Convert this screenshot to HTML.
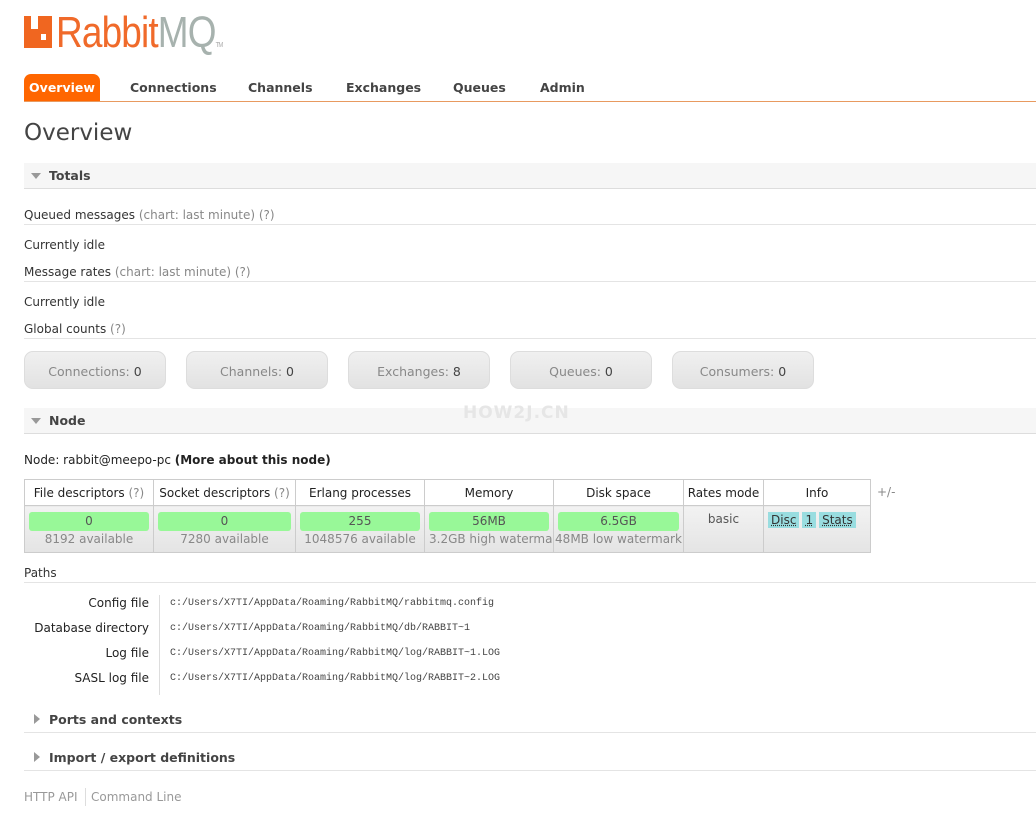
<!DOCTYPE html>
<html><head><meta charset="utf-8"><style>
*{margin:0;padding:0;box-sizing:border-box}
body{width:1036px;height:829px;background:#fff;font-family:"DejaVu Sans","Liberation Sans",sans-serif;font-size:12px;color:#484848;position:relative;overflow:hidden}
.a{position:absolute;white-space:nowrap}
.line{position:absolute;left:24px;right:0;height:1px;background:#e4e4e4}
.sec{position:absolute;left:24px;right:0;height:26px;background:#f6f6f6;border-bottom:1px solid #ddd}
.sec b{position:absolute;left:25px;top:5px;font-size:12.5px;color:#444}
.tri{position:absolute;left:7px;top:10px;width:0;height:0;border-left:5px solid transparent;border-right:5px solid transparent;border-top:6px solid #999}
.trr{position:absolute;left:10px;width:0;height:0;border-top:5px solid transparent;border-bottom:5px solid transparent;border-left:6px solid #999}
.g{color:#888}
.box{position:absolute;top:351px;width:142px;height:38px;border-radius:9px;background:linear-gradient(#f0f0f0,#e2e2e2);border:1px solid #ddd;text-align:center;line-height:39px;color:#888;font-size:12.5px}
.box span{color:#444}
table{position:absolute;left:24px;top:479px;border-collapse:collapse;table-layout:fixed;width:846px}
td,th{border:1px solid #ccc;text-align:center;font-weight:normal;font-size:12px;overflow:hidden;white-space:nowrap}
th{height:26px;color:#222;background:#fff}
td{height:47px;vertical-align:top;background:linear-gradient(#f2f2f2,#e4e4e4);color:#888;padding-top:6px}
.bar{margin:0 4px;height:19px;background:#98f898;border-radius:3px;color:#555;line-height:19px}
.sub{line-height:17px;white-space:nowrap}
.tag{display:inline-block;background:#99dde0;padding:1px 3px;color:#333;text-decoration:underline dotted;margin-right:3px}
.lab{position:absolute;right:887px;text-align:right;color:#222;white-space:nowrap}
.val{position:absolute;left:170px;font-family:"Liberation Mono",monospace;font-size:10px;color:#444}
</style></head><body>
<div class="a" style="left:24px;top:16px;width:28px;height:32px;background:#f06620"></div>
<div class="a" style="left:31px;top:16px;width:7px;height:13px;background:#fff"></div>
<div class="a" style="left:41px;top:34px;width:5px;height:6px;background:#fff"></div>
<div class="a" style="left:56px;top:8px;font-family:'Liberation Sans',sans-serif;font-size:44px;letter-spacing:-1px;color:#f06a2a;font-weight:normal;transform:scaleX(0.84);transform-origin:left">Rabbit<span style="color:#a7b2ae">MQ</span><span style="font-size:7px;color:#aaa">TM</span></div>

<div class="a" style="left:24px;top:74px;width:76px;height:27px;background:#ff6600;border-radius:7px 7px 0 0;color:#fff;font-weight:bold;font-size:12.5px;text-align:center;line-height:28px">Overview</div>
<div class="a" style="left:24px;right:0;top:101px;height:1px;background:#e89a60"></div>
<div class="a" style="left:130px;top:80px;font-weight:bold;font-size:12.5px;color:#444">Connections</div>
<div class="a" style="left:248px;top:80px;font-weight:bold;font-size:12.5px;color:#444">Channels</div>
<div class="a" style="left:346px;top:80px;font-weight:bold;font-size:12.5px;color:#444">Exchanges</div>
<div class="a" style="left:453px;top:80px;font-weight:bold;font-size:12.5px;color:#444">Queues</div>
<div class="a" style="left:540px;top:80px;font-weight:bold;font-size:12.5px;color:#444">Admin</div>

<div class="a" style="left:24px;top:120px;font-size:23px;color:#444">Overview</div>

<div class="sec" style="top:163px"><div class="tri"></div><b>Totals</b></div>
<div class="a" style="left:24px;top:208px;color:#333">Queued messages <span class="g">(chart: last minute) (?)</span></div>
<div class="line" style="top:224px"></div>
<div class="a" style="left:24px;top:238px;color:#333">Currently idle</div>
<div class="a" style="left:24px;top:265px;color:#333">Message rates <span class="g">(chart: last minute) (?)</span></div>
<div class="line" style="top:281px"></div>
<div class="a" style="left:24px;top:295px;color:#333">Currently idle</div>
<div class="a" style="left:24px;top:322px;color:#333">Global counts <span class="g">(?)</span></div>
<div class="line" style="top:338px"></div>

<div class="box" style="left:24px">Connections: <span>0</span></div>
<div class="box" style="left:186px">Channels: <span>0</span></div>
<div class="box" style="left:348px">Exchanges: <span>8</span></div>
<div class="box" style="left:510px">Queues: <span>0</span></div>
<div class="box" style="left:672px">Consumers: <span>0</span></div>

<div class="sec" style="top:408px"><div class="tri"></div><b>Node</b></div>
<div class="a" style="left:463px;top:403px;font-size:17px;font-weight:bold;color:#e6e6e6;letter-spacing:1px">HOW2J.CN</div>
<div class="a" style="left:24px;top:453px;color:#222">Node: rabbit@meepo-pc <b>(More about this node)</b></div>

<table>
<colgroup><col style="width:129px"><col style="width:142px"><col style="width:129px"><col style="width:129px"><col style="width:130px"><col style="width:80px"><col style="width:107px"></colgroup>
<tr><th>File descriptors <span class="g">(?)</span></th><th>Socket descriptors <span class="g">(?)</span></th><th>Erlang processes</th><th>Memory</th><th>Disk space</th><th>Rates mode</th><th>Info</th></tr>
<tr>
<td><div class="bar">0</div><div class="sub">8192 available</div></td>
<td><div class="bar">0</div><div class="sub">7280 available</div></td>
<td><div class="bar">255</div><div class="sub">1048576 available</div></td>
<td style="text-align:left"><div class="bar" style="text-align:center">56MB</div><div class="sub" style="padding-left:4px">3.2GB high watermark</div></td>
<td><div class="bar">6.5GB</div><div class="sub">48MB low watermark</div></td>
<td style="color:#555">basic</td>
<td style="text-align:left;padding-left:4px"><span class="tag">Disc</span><span class="tag">1</span><span class="tag">Stats</span></td>
</tr></table>
<div class="a g" style="left:877px;top:485px">+/-</div>

<div class="a" style="left:24px;top:566px;color:#333">Paths</div>
<div class="line" style="top:582px"></div>
<div class="a" style="left:159px;top:595px;width:1px;height:100px;background:#ddd"></div>
<div class="lab" style="top:596px">Config file</div>
<div class="lab" style="top:621px">Database directory</div>
<div class="lab" style="top:646px">Log file</div>
<div class="lab" style="top:671px">SASL log file</div>
<div class="val" style="top:598px">c:/Users/X7TI/AppData/Roaming/RabbitMQ/rabbitmq.config</div>
<div class="val" style="top:623px">c:/Users/X7TI/AppData/Roaming/RabbitMQ/db/RABBIT~1</div>
<div class="val" style="top:648px">C:/Users/X7TI/AppData/Roaming/RabbitMQ/log/RABBIT~1.LOG</div>
<div class="val" style="top:673px">C:/Users/X7TI/AppData/Roaming/RabbitMQ/log/RABBIT~2.LOG</div>

<div class="trr a" style="left:34px;top:714px"></div>
<div class="a" style="left:49px;top:712px;font-weight:bold;font-size:12.5px;color:#444">Ports and contexts</div>
<div class="line" style="top:732px"></div>
<div class="trr a" style="left:34px;top:752px"></div>
<div class="a" style="left:49px;top:750px;font-weight:bold;font-size:12.5px;color:#444">Import / export definitions</div>
<div class="line" style="top:770px"></div>

<div class="a" style="left:24px;top:790px;color:#999">HTTP API</div>
<div class="a" style="left:85px;top:788px;width:1px;height:18px;background:#ddd"></div>
<div class="a" style="left:91px;top:790px;color:#999">Command Line</div>
</body></html>
